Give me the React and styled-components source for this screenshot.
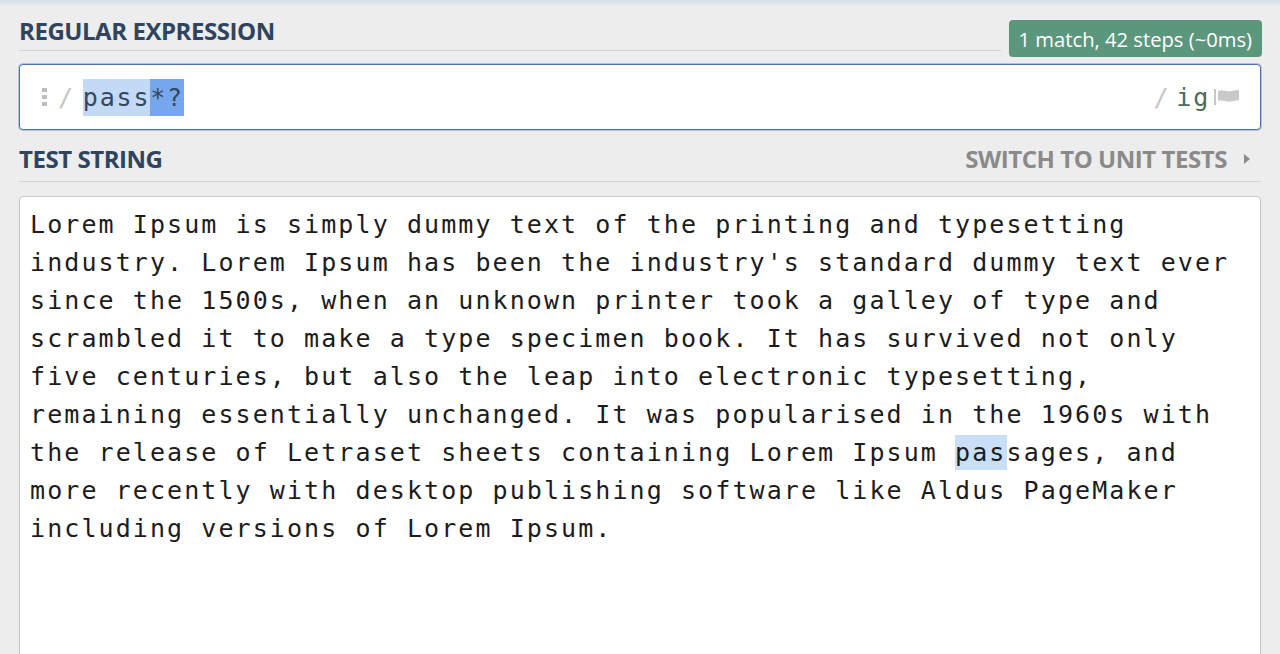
import React from "react";
import styled, { createGlobalStyle } from "styled-components";

const GlobalStyle = createGlobalStyle`
  html, body {
    margin: 0;
    padding: 0;
    background: #ededed;
  }
`;

const Page = styled.div`
  height: 654px;
  padding: 16px 19px 0;
  box-sizing: border-box;
  background: linear-gradient(to bottom, #d9dee5 0px, #ededed 7px) #ededed;
  font-family: "Open Sans", "Liberation Sans", sans-serif;
  overflow: hidden;
`;

const HeaderRow = styled.div`
  display: flex;
  align-items: flex-end;
  gap: 8px;
`;

const Title = styled.div`
  flex: 1;
  font-size: 24px;
  line-height: 30px;
  font-weight: 700;
  color: #2e4461;
  letter-spacing: -0.45px;
  border-bottom: 1px solid #d3d3d3;
  padding-bottom: ${(p) => p.$pad}px;
  margin-bottom: ${(p) => p.$mb}px;
  display: flex;
  justify-content: space-between;
  align-items: baseline;
`;

const SwitchLink = styled.span`
  color: #8a8a8a;
  display: flex;
  align-items: center;
  gap: 16px;
  padding-right: 10px;
`;

const Badge = styled.div`
  background: #5a977d;
  color: #fff;
  font-size: 20.2px;
  line-height: 37px;
  height: 37px;
  padding: 1px 10px 0 10px;
  box-sizing: border-box;
  border-radius: 4px;
  margin-right: -1px;
  white-space: nowrap;
`;

const RegexBox = styled.div`
  margin-top: 7px;
  height: 66px;
  box-sizing: border-box;
  background: #fff;
  border: 1px solid #4f74ad;
  box-shadow: 0 0 0 1px rgba(79, 116, 173, 0.35);
  border-radius: 4px;
  display: flex;
  align-items: center;
  padding: 0 20px 0 22px;
  font-family: "DejaVu Sans Mono", "Liberation Mono", monospace;
  font-size: 25px;
  letter-spacing: 1.8px;
`;

const Slash = styled.span`
  color: #c6c6c6;
  margin: 0 ${(p) => p.$mr || 0}px 0 ${(p) => p.$ml || 0}px;
`;

const Pattern = styled.div`
  flex: 1;
  line-height: 37px;
  color: #34475e;
  display: flex;
`;

const Sel = styled.span`
  background: ${(p) => (p.$strong ? "#76a7ee" : "#c3daf6")};
`;

const Flags = styled.span`
  color: #4d6b59;
`;

const FlagSep = styled.span`
  width: 2px;
  height: 16px;
  background: #c8c8c8;
  margin: 0 2px 0 4px;
`;

const TestHead = styled.div`
  margin-top: 14px;
`;

const TextArea = styled.div`
  margin-top: 14px;
  background: #fff;
  border: 1px solid #c6c6c6;
  border-radius: 4px 4px 0 0;
  min-height: 520px;
  padding: 9px 10px;
  font-family: "DejaVu Sans Mono", "Liberation Mono", monospace;
  font-size: 25px;
  line-height: 38px;
  letter-spacing: 2.08px;
  color: #1c1c1c;
`;

const Line = styled.div`
  white-space: pre;
`;

const Match = styled.span`
  background: #c9dff7;
  padding: 3px 0;
`;

function Grip() {
  return (
    <svg width="6" height="18" viewBox="0 0 6 18" style={{ marginRight: 10 }}>
      <rect x="0" y="0" width="5" height="4" fill="#bdbdbd" />
      <rect x="0" y="7" width="5" height="4" fill="#bdbdbd" />
      <rect x="0" y="14" width="5" height="4" fill="#bdbdbd" />
    </svg>
  );
}

function FlagIcon() {
  return (
    <svg width="22" height="16" viewBox="0 0 22 16">
      <path
        d="M0 2 C5 0, 9 3.5, 14 2 C17 1, 19 1.5, 21 1 L21 11 C18 12, 16 11.5, 13 12.5 C9 13.5, 5 10.5, 0 12 Z"
        fill="#c9c9c9"
      />
    </svg>
  );
}

function Caret() {
  return (
    <svg width="8" height="12" viewBox="0 0 8 12">
      <path d="M1 1 L7 6 L1 11 Z" fill="#8a8a8a" />
    </svg>
  );
}

const lines = [
  "Lorem Ipsum is simply dummy text of the printing and typesetting",
  "industry. Lorem Ipsum has been the industry's standard dummy text ever",
  "since the 1500s, when an unknown printer took a galley of type and",
  "scrambled it to make a type specimen book. It has survived not only",
  "five centuries, but also the leap into electronic typesetting,",
  "remaining essentially unchanged. It was popularised in the 1960s with",
];

export default function App() {
  return (
    <>
      <GlobalStyle />
      <Page>
        <HeaderRow>
          <Title $pad={4} $mb={6}>REGULAR EXPRESSION</Title>
          <Badge>1 match, 42 steps (~0ms)</Badge>
        </HeaderRow>
        <RegexBox>
          <Grip />
          <Slash $mr={8}>/</Slash>
          <Pattern>
            <Sel>pass</Sel>
            <Sel $strong>*?</Sel>
          </Pattern>
          <Slash $mr={6}>/</Slash>
          <Flags>ig</Flags>
          <FlagSep />
          <FlagIcon />
        </RegexBox>
        <TestHead>
          <Title $pad={7} $mb={0}>
            <span>TEST STRING</span>
            <SwitchLink>
              SWITCH TO UNIT TESTS <Caret />
            </SwitchLink>
          </Title>
        </TestHead>
        <TextArea>
          {lines.map((l) => (
            <Line key={l}>{l}</Line>
          ))}
          <Line>
            the release of Letraset sheets containing Lorem Ipsum <Match>pas</Match>sages, and
          </Line>
          <Line>more recently with desktop publishing software like Aldus PageMaker</Line>
          <Line>including versions of Lorem Ipsum.</Line>
        </TextArea>
      </Page>
    </>
  );
}
